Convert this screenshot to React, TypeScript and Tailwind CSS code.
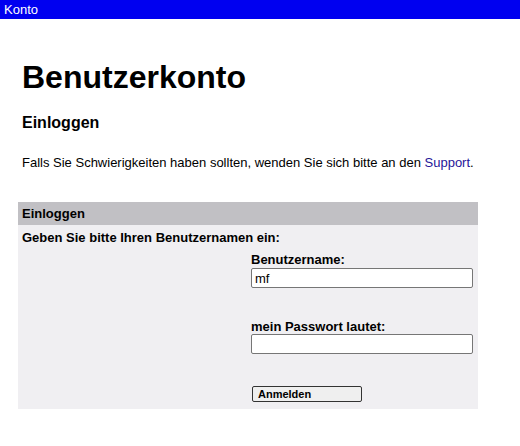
export default function App() {
  return (
    <div className="w-[520px] h-[446px] bg-white text-black" style={{ fontFamily: '"Liberation Sans", Arial, sans-serif' }}>
      <div className="h-[19px] bg-[#0000f0] text-white text-[13px] leading-[19px] pl-[4px]">Konto</div>
      <div className="pl-[22px]">
        <h1 className="text-[32px] font-bold leading-[37px] mt-[40px]">Benutzerkonto</h1>
        <h2 className="text-[16px] font-bold leading-[19px] mt-[17px]">Einloggen</h2>
        <p className="text-[13px] leading-[15px] mt-[23px]">
          Falls Sie Schwierigkeiten haben sollten, wenden Sie sich bitte an den{" "}
          <a className="text-[#1f1599]">Support</a>.
        </p>
      </div>
      <div className="ml-[18px] w-[460px] mt-[32px] bg-[#f0eff2] text-[13px]">
        <div className="h-[23px] bg-[#c1c0c4] font-bold leading-[23px] pl-[4px]">Einloggen</div>
        <div className="pl-[4px] pt-[5px] font-bold leading-[15px]">Geben Sie bitte Ihren Benutzernamen ein:</div>
        <div className="pl-[233px] pb-[5px]">
          <div className="font-bold leading-[15px] mt-[7px]">Benutzername:</div>
          <input
            defaultValue="mf"
            className="mt-[1px] w-[222px] h-[20px] bg-white border border-[#767676] rounded-[2px] px-[3px] text-[13px] outline-none"
            style={{ fontFamily: '"Liberation Sans", Arial, sans-serif' }}
          />
          <div className="font-bold leading-[15px] mt-[31px]">mein Passwort lautet:</div>
          <input
            type="password"
            className="w-[222px] h-[20px] bg-white border border-[#767676] rounded-[2px] px-[3px] text-[13px] outline-none"
          />
          <div className="mt-[30px] pl-[1px]">
            <button
              className="w-[110px] h-[16px] bg-[#efefef] border border-[#333] rounded-[2px] text-[11px] font-bold text-left pl-[5px] leading-[14px]"
              style={{ fontFamily: '"Liberation Sans", Arial, sans-serif' }}
            >
              Anmelden
            </button>
          </div>
        </div>
      </div>
    </div>
  );
}
